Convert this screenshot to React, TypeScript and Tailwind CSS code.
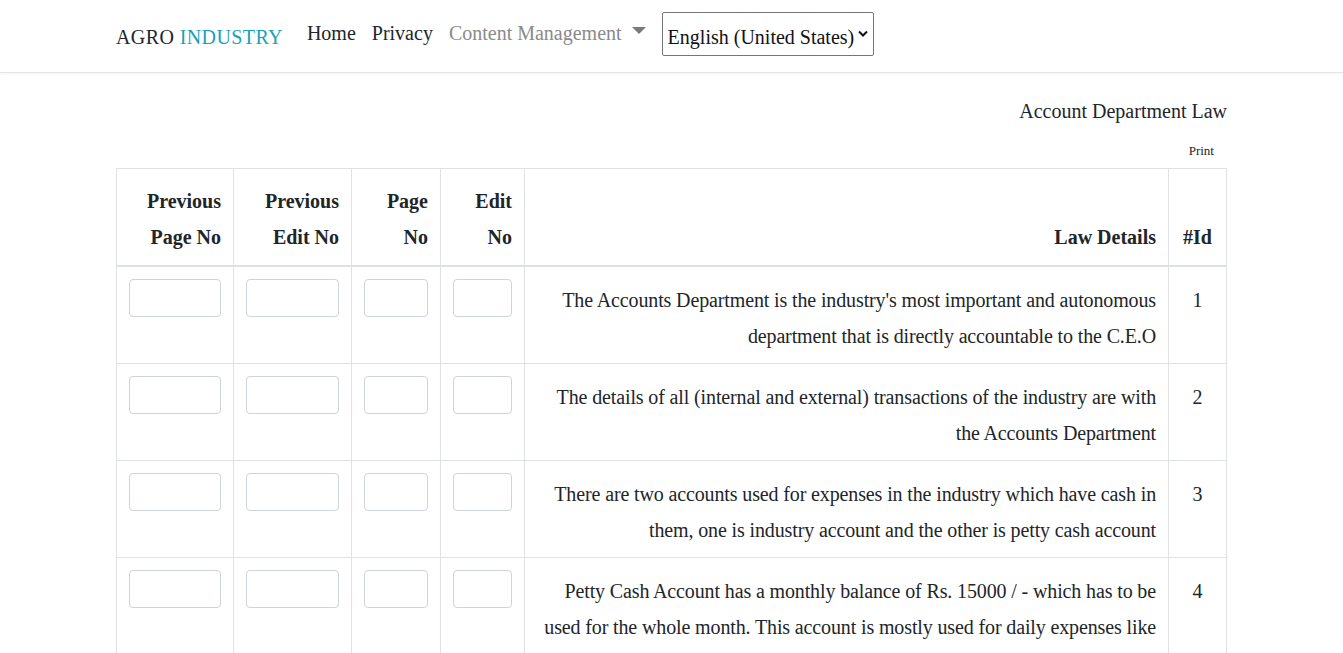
import React from "react";

const rows = [
  {
    id: 1,
    text: "The Accounts Department is the industry's most important and autonomous department that is directly accountable to the C.E.O",
  },
  {
    id: 2,
    text: "The details of all (internal and external) transactions of the industry are with the Accounts Department",
  },
  {
    id: 3,
    text: "There are two accounts used for expenses in the industry which have cash in them, one is industry account and the other is petty cash account",
  },
  {
    id: 4,
    text: "Petty Cash Account has a monthly balance of Rs. 15000 / - which has to be used for the whole month. This account is mostly used for daily expenses like stationery, refreshments and other small payments of the industry",
  },
];

function Input() {
  return (
    <div className="h-[38px] w-full rounded-[4px] border border-[#ced4da] bg-white" />
  );
}

export default function App() {
  return (
    <div
      className="min-h-screen bg-white text-[#212529]"
      style={{ fontFamily: '"Liberation Serif", "Times New Roman", serif' }}
    >
      <nav className="h-[73px] border-b border-[#e5e5e5] shadow-[0_1px_3px_rgba(0,0,0,0.05)] bg-white">
        <div className="mx-auto flex h-full w-[1111px] items-center pr-[1px]">
          <div className="mt-[1px] text-[20px] leading-[30px] tracking-[0.4px]">
            <span className="text-[#212529]">AGRO </span>
            <span className="text-[#17a2b8]">INDUSTRY</span>
          </div>
          <div className="ml-[8px] flex items-center text-[20px] leading-[30px]">
            <span className="-mt-[6px] px-4 text-[#212529]">Home</span>
            <span className="-mt-[6px] pl-0 pr-4 text-[#212529]">Privacy</span>
            <span className="-mt-[6px] flex items-center text-[#8a8a8a]">
              Content Management
              <svg width="14" height="8" viewBox="0 0 14 8" className="ml-[10px] -mt-[4px]">
                <path d="M0 0 L14 0 L7 7 Z" fill="#7a7a7a" />
              </svg>
            </span>
            <div className="ml-[16px] -mt-[4px] flex h-[44px] w-[212px] items-center justify-between rounded-[2px] border border-[#767676] pl-[5px] pr-[5px] text-[20px] text-[#111]">
              <span className="mt-[5px]">English (United States)</span>
              <svg width="10" height="7" viewBox="0 0 10 7" className="-mt-[2px]">
                <path d="M1 1.5 L5 5.5 L9 1.5" fill="none" stroke="#111" strokeWidth="2" />
              </svg>
            </div>
          </div>
        </div>
      </nav>

      <main className="mx-auto w-[1111px]">
        <div className="mt-[23px] text-right text-[20px] leading-[30px]">
          Account Department Law
        </div>
        <div className="mt-[15px] flex justify-end">
          <span className="pr-[13px] text-[13px] leading-[20px]">Print</span>
        </div>
        <table className="mt-[7px] w-full table-fixed border-collapse text-[20px] leading-[36px]">
          <colgroup>
            <col className="w-[117px]" />
            <col className="w-[118px]" />
            <col className="w-[89px]" />
            <col className="w-[84px]" />
            <col />
            <col className="w-[58px]" />
          </colgroup>
          <thead>
            <tr className="border-b-2 border-[#dee2e6]">
              {[
                ["Previous", "Page No"],
                ["Previous", "Edit No"],
                ["Page", "No"],
                ["Edit", "No"],
              ].map((h, i) => (
                <th
                  key={i}
                  className="border border-[#dee2e6] px-3 pt-[14px] pb-[10px] text-right align-bottom font-bold"
                >
                  {h[0]}
                  <br />
                  {h[1]}
                </th>
              ))}
              <th className="border border-[#dee2e6] px-3 pt-[14px] pb-[10px] text-right align-bottom font-bold">
                Law Details
              </th>
              <th className="border border-[#dee2e6] px-3 pt-[14px] pb-[10px] text-center align-bottom font-bold">
                #Id
              </th>
            </tr>
          </thead>
          <tbody>
            {rows.map((r) => (
              <tr key={r.id}>
                <td className="border border-[#dee2e6] p-3 align-top">
                  <Input />
                </td>
                <td className="border border-[#dee2e6] p-3 align-top">
                  <Input />
                </td>
                <td className="border border-[#dee2e6] p-3 align-top">
                  <Input />
                </td>
                <td className="border border-[#dee2e6] p-3 align-top">
                  <Input />
                </td>
                <td className="border border-[#dee2e6] px-3 pt-[15px] pb-[9px] text-right align-top tracking-[-0.13px]">
                  {r.text}
                </td>
                <td className="border border-[#dee2e6] px-3 pt-[15px] pb-[9px] text-center align-top">
                  {r.id}
                </td>
              </tr>
            ))}
          </tbody>
        </table>
      </main>
    </div>
  );
}
